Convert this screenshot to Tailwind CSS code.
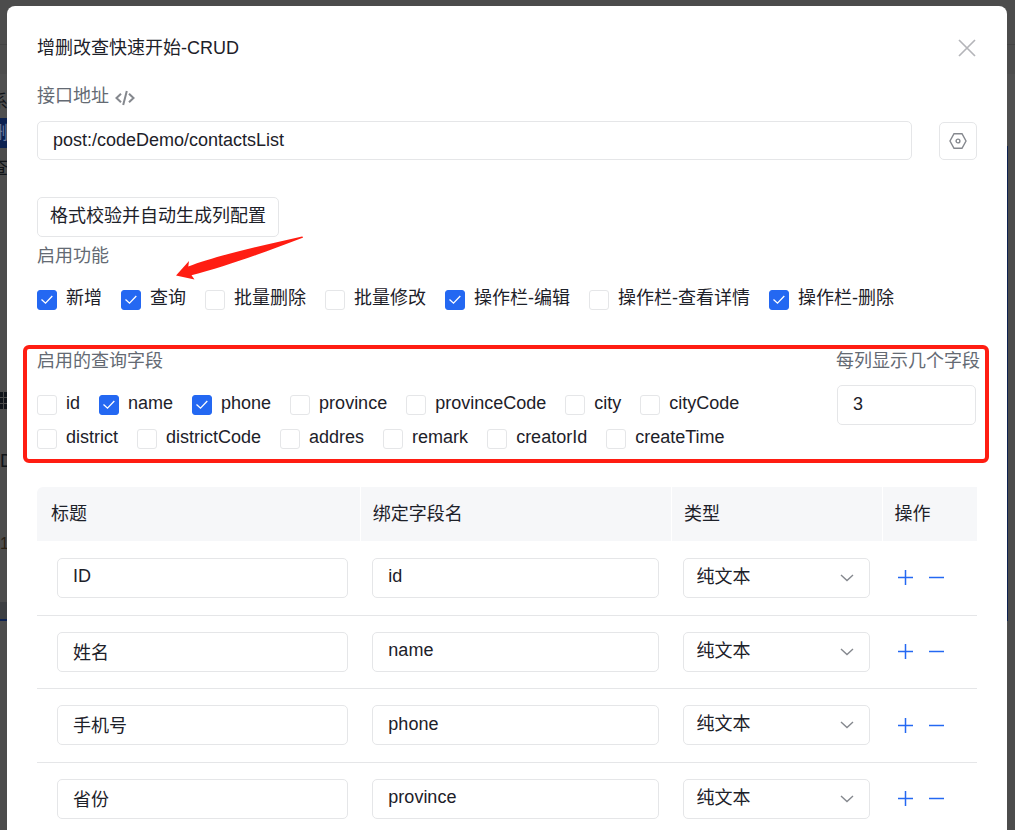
<!DOCTYPE html>
<html lang="zh-CN">
<head>
<meta charset="utf-8">
<title>增删改查快速开始-CRUD</title>
<script src="https://cdn.jsdelivr.net/npm/@tailwindcss/browser@4"></script>
</head>
<body class="bg-[#4c4c4c]">
<div class="relative h-screen overflow-hidden bg-[#4c4c4c] font-['Liberation_Sans','Noto_Sans_CJK_SC',sans-serif] text-[18px] leading-6 text-[#1d2129]">

  <!-- dimmed page behind the dialog -->
  <div class="absolute inset-0" aria-hidden="true">
    <div class="absolute inset-x-0 top-11 h-px bg-[#434343]"></div>
    <div class="absolute inset-x-0 top-[74px] h-14 bg-[#505050]"></div>
    <div class="absolute top-[90px] left-0 h-6 w-2 overflow-hidden whitespace-nowrap text-[#101418]"><span class="float-right">系</span></div>
    <div class="absolute top-[118px] left-0 h-[30px] w-2 overflow-hidden bg-[#0c2150] leading-[30px] text-[#6b7a9c]"><span class="float-right">删</span></div>
    <div class="absolute top-[156px] left-0 h-6 w-2 overflow-hidden text-[#101418]"><span class="float-right">查</span></div>
    <div class="absolute top-[392px] left-0 grid w-[7px] grid-cols-2 gap-px">
      <i class="h-[5px] bg-[#11151b]"></i><i class="h-[5px] bg-[#11151b]"></i>
      <i class="h-[5px] bg-[#11151b]"></i><i class="h-[5px] bg-[#11151b]"></i>
      <i class="h-[5px] bg-[#11151b]"></i><i class="h-[5px] bg-[#11151b]"></i>
    </div>
    <div class="absolute top-[449px] left-0 h-6 w-2 overflow-hidden text-[#101418]">D</div>
    <div class="absolute top-[532px] left-0 h-6 w-2 overflow-hidden text-[16px] text-[#2a2014]">1</div>
    <div class="absolute top-[602px] left-0 h-[18px] w-2 bg-[#3d3f42]"></div>
    <div class="absolute top-[619px] left-0 h-0.5 w-2 bg-[#0c2150]"></div>
    <div class="absolute top-[146px] right-[7px] h-[475px] w-px bg-[#0c2150]"></div>
  </div>

  <main role="dialog" aria-labelledby="dialog-title" class="relative mt-1.5 mr-2 ml-[7px] min-h-full rounded-t-lg bg-white px-[30px] pt-6">
    <header class="flex h-9 items-center justify-between">
      <h1 id="dialog-title">增删改查快速开始-CRUD</h1>
      <button type="button" aria-label="关闭" class="flex size-5 items-center justify-center text-[#b4b5b9]">
        <svg class="size-5" viewBox="0 0 20 20" fill="none" stroke="currentColor" stroke-width="1.7"><path d="M2 2l16 16M18 2L2 18"/></svg>
      </button>
    </header>

    <div class="mt-[18px] flex items-center gap-1.5 text-[#646a73]">
      <label for="api">接口地址</label>
      <svg class="mt-1 h-4 w-5" viewBox="0 0 20 16" fill="none" stroke="#85888e" stroke-width="2"><path d="M6 3.800L1.500 8L6 12.200M14 3.800L18.500 8L14 12.200M11.800 1L8.200 15"/></svg>
    </div>
    <div class="mt-[13px] flex items-center gap-[27px]">
      <input id="api" type="text" value="post:/codeDemo/contactsList" class="h-[39px] min-w-0 flex-1 rounded-[5px] border border-[#e5e6e8] px-[15px]">
      <button type="button" aria-label="接口设置" class="flex size-[38px] items-center justify-center rounded-[5px] border border-[#e5e6e8] text-[#85888e]">
        <svg class="size-[18px]" viewBox="0 0 18 18" fill="none" stroke="currentColor" stroke-width="1.4"><path d="M5 1.700h8L17 9l-4 7.300H5L1 9z"/><circle cx="9" cy="9" r="1.900"/></svg>
      </button>
    </div>

    <button type="button" class="mt-[37px] block h-10 rounded-[5px] border border-[#e5e6e8] px-3 pb-0.5 whitespace-nowrap">格式校验并自动生成列配置</button>

    <fieldset>
      <legend class="pt-[7px] text-[#646a73]">启用功能</legend>
      <div id="features" class="mt-[18px] flex flex-wrap gap-x-[19px] gap-y-[10px]"></div>
    </fieldset>

    <section class="relative mt-[39px] flex justify-between">
      <fieldset class="min-w-0 flex-1">
        <legend class="text-[#646a73]">启用的查询字段</legend>
        <div id="fields" class="mt-[18px] mr-20 flex flex-wrap gap-x-[19px] gap-y-[10px]"></div>
      </fieldset>
      <div class="w-[141px]">
        <label for="per-row" class="block whitespace-nowrap text-[#646a73]">每列显示几个字段</label>
        <input id="per-row" type="text" value="3" class="mt-3 ml-px h-10 w-[139px] rounded-[5px] border border-[#e5e6e8] px-[15px] pb-0.5">
      </div>
      <div class="pointer-events-none absolute -top-1 -right-3 -bottom-3.5 -left-3.5 rounded-md border-4 border-[#ff1d12]"></div>
    </section>

    <svg class="pointer-events-none absolute top-[229px] left-[168px] h-[46px] w-[130px]" viewBox="0 0 130 46" fill="#ff1d12" aria-hidden="true"><path d="M1 40.500L14 26L13.300 31.500C40 21 85 11 127 1.500Q129 2 127 3C90 17 50 32 16.500 40.200L19.500 44.500z"/></svg>

    <table class="mt-[38px] w-full table-fixed border-collapse text-left">
      <colgroup><col class="w-[34.4%]"><col class="w-[33.1%]"><col class="w-[22.4%]"><col></colgroup>
      <thead>
        <tr class="h-[54px] bg-[#f6f7f9]">
          <th class="rounded-tl-md border-r border-white px-3.5 font-normal">标题</th>
          <th class="border-r border-white px-3 font-normal">绑定字段名</th>
          <th class="border-r border-white px-3 font-normal">类型</th>
          <th class="px-3 font-normal">操作</th>
        </tr>
      </thead>
      <tbody id="rows"></tbody>
    </table>
  </main>
</div>

<script>
const check = ([text, on]) => `
  <label class="flex h-6 gap-[9px] whitespace-nowrap">
    <span class="relative mt-1 size-5 shrink-0">
      <input type="checkbox" ${on ? 'checked' : ''} class="peer block size-5 appearance-none rounded-[3px] border border-[#e5e6e8] bg-white checked:border-[#2468f2] checked:bg-[#2468f2]">
      <svg class="pointer-events-none absolute inset-0 hidden size-5 peer-checked:block" viewBox="0 0 20 20" fill="none" stroke="#fff" stroke-width="1.3"><path d="M4.500 9.500L8.500 13.200L15.300 6"/></svg>
    </span>
    <span>${text}</span>
  </label>`;
document.getElementById('features').innerHTML = [
  ['新增', 1], ['查询', 1], ['批量删除', 0], ['批量修改', 0], ['操作栏-编辑', 1], ['操作栏-查看详情', 0], ['操作栏-删除', 1]
].map(check).join('');
document.getElementById('fields').innerHTML = [
  ['id', 0], ['name', 1], ['phone', 1], ['province', 0], ['provinceCode', 0], ['city', 0], ['cityCode', 0],
  ['district', 0], ['districtCode', 0], ['addres', 0], ['remark', 0], ['creatorId', 0], ['createTime', 0]
].map(check).join('');
document.getElementById('rows').innerHTML = [
  ['ID', 'id'], ['姓名', 'name'], ['手机号', 'phone'], ['省份', 'province']
].map(([title, field]) => `
  <tr class="h-[74px] border-b border-[#e5e6e8] even:h-[73px]">
    <td class="pr-3 pl-5"><input type="text" aria-label="标题" value="${title}" class="block h-10 w-full rounded-[5px] border border-[#e5e6e8] px-[15px] pb-0.5"></td>
    <td class="px-3"><input type="text" aria-label="绑定字段名" value="${field}" class="block h-10 w-full rounded-[5px] border border-[#e5e6e8] px-[15px] pb-0.5"></td>
    <td class="px-3">
      <div class="relative">
        <select aria-label="类型" class="block h-10 w-full appearance-none rounded-[5px] border border-[#e5e6e8] bg-white px-3 pb-0.5"><option>纯文本</option></select>
        <svg class="pointer-events-none absolute top-4 right-4 h-2 w-3.5" viewBox="0 0 14 8" fill="none" stroke="#85888e" stroke-width="1.4"><path d="M1 1l6 5.500L13 1"/></svg>
      </div>
    </td>
    <td class="px-4">
      <div class="flex gap-4 text-[#2468f2]">
        <button type="button" aria-label="添加"><svg class="block size-[15px]" viewBox="0 0 15 15" fill="none" stroke="currentColor" stroke-width="1.5"><path d="M0 7.500h15M7.500 0v15"/></svg></button>
        <button type="button" aria-label="删除"><svg class="block size-[15px]" viewBox="0 0 15 15" fill="none" stroke="currentColor" stroke-width="1.5"><path d="M0 7.500h15"/></svg></button>
      </div>
    </td>
  </tr>`).join('');
</script>
</body>
</html>
